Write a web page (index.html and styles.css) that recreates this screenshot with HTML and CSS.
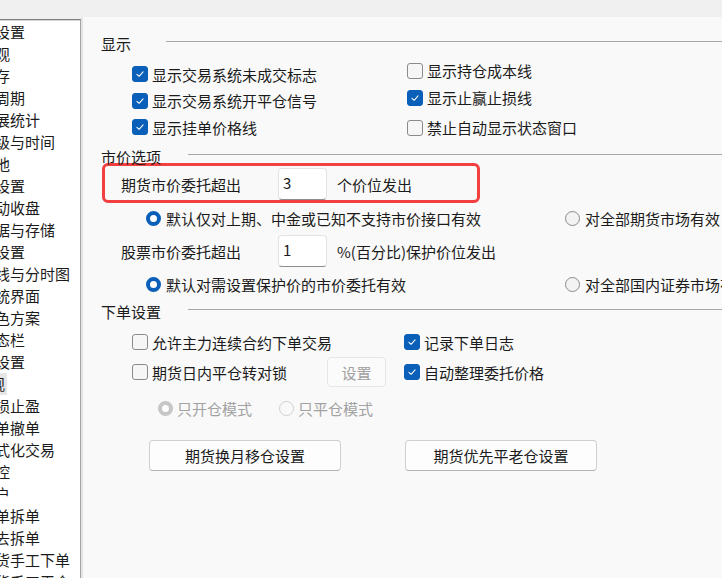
FILE: index.html
```html
<!DOCTYPE html>
<html lang="zh-CN">
<head>
  <meta charset="UTF-8" />
  <meta name="viewport" content="width=device-width, initial-scale=1.0" />
  <title>交易设置</title>
  <link rel="stylesheet" href="styles.css">
</head>

<body>
  <div class="window">
    <ul class="nav-list">
      <li>设置</li>
      <li>观</li>
      <li>存</li>
      <li>周期</li>
      <li>展统计</li>
      <li>级与时间</li>
      <li>他</li>
      <li>设置</li>
      <li>动收盘</li>
      <li>据与存储</li>
      <li>设置</li>
      <li>线与分时图</li>
      <li>统界面</li>
      <li>色方案</li>
      <li>态栏</li>
      <li>设置</li>
      <li><span class="current">观</span></li>
      <li>损止盈</li>
      <li>单撤单</li>
      <li>式化交易</li>
      <li>控</li>
      <li>户</li>
      <li>单拆单</li>
      <li>去拆单</li>
      <li>货手工下单</li>
      <li>货手工平仓</li>
    </ul>
    <div class="gutter"></div>

    <div class="panel">
      <!-- 显示 -->
      <div class="group-title">
        <span class="title-text short">显示</span>
        <span class="title-line"></span>
      </div>
      <div class="check-grid">
        <div class="check-col first">
          <label class="check-row"><span class="box on"><svg viewBox="0 0 16 16"><polyline points="4.5,8.3 7,10.6 11.5,5.6" /></svg></span>显示交易系统未成交标志</label>
          <label class="check-row"><span class="box on"><svg viewBox="0 0 16 16"><polyline points="4.5,8.3 7,10.6 11.5,5.6" /></svg></span>显示交易系统开平仓信号</label>
          <label class="check-row"><span class="box on"><svg viewBox="0 0 16 16"><polyline points="4.5,8.3 7,10.6 11.5,5.6" /></svg></span>显示挂单价格线</label>
        </div>
        <div class="check-col second">
          <label class="check-row"><span class="box"></span>显示持仓成本线</label>
          <label class="check-row"><span class="box on"><svg viewBox="0 0 16 16"><polyline points="4.5,8.3 7,10.6 11.5,5.6" /></svg></span>显示止赢止损线</label>
          <label class="check-row spaced"><span class="box"></span>禁止自动显示状态窗口</label>
        </div>
      </div>

      <!-- 市价选项 -->
      <div class="group-title gap-top">
        <span class="title-text">市价选项</span>
        <span class="title-line"></span>
      </div>
      <div class="price-row marked">
        <span class="price-label">期货市价委托超出</span>
        <input class="num-input" type="text" value="3" readonly>
        <span class="price-suffix">个价位发出</span>
      </div>
      <div class="radio-row">
        <span class="radio-item wide"><span class="radio on"></span>默认仅对上期、中金或已知不支持市价接口有效</span>
        <span class="radio-item"><span class="radio"></span>对全部期货市场有效</span>
      </div>
      <div class="price-row plain">
        <span class="price-label">股票市价委托超出</span>
        <input class="num-input" type="text" value="1" readonly>
        <span class="price-suffix">%(百分比)保护价位发出</span>
      </div>
      <div class="radio-row">
        <span class="radio-item wide"><span class="radio on"></span>默认对需设置保护价的市价委托有效</span>
        <span class="radio-item"><span class="radio"></span>对全部国内证券市场有效</span>
      </div>

      <!-- 下单设置 -->
      <div class="group-title gap-top-lg">
        <span class="title-text">下单设置</span>
        <span class="title-line"></span>
      </div>
      <div class="order-row first">
        <label class="check-row order-a wide"><span class="box"></span>允许主力连续合约下单交易</label>
        <label class="check-row"><span class="box on"><svg viewBox="0 0 16 16"><polyline points="4.5,8.3 7,10.6 11.5,5.6" /></svg></span>记录下单日志</label>
      </div>
      <div class="order-row">
        <label class="check-row order-a"><span class="box"></span>期货日内平仓转对锁</label>
        <button class="btn-small" disabled>设置</button>
        <label class="check-row"><span class="box on"><svg viewBox="0 0 16 16"><polyline points="4.5,8.3 7,10.6 11.5,5.6" /></svg></span>自动整理委托价格</label>
      </div>
      <div class="radio-row disabled">
        <span class="radio-item mode"><span class="radio dim-on"></span>只开仓模式</span>
        <span class="radio-item"><span class="radio dim"></span>只平仓模式</span>
      </div>

      <div class="button-row">
        <button class="btn">期货换月移仓设置</button>
        <button class="btn">期货优先平老仓设置</button>
      </div>
    </div>
  </div>
</body>
</html>
```

FILE: styles.css
```css
body {
  margin: 0;
  background: #f0f0f0;
  font-family: "Noto Sans CJK SC", "Microsoft YaHei", sans-serif;
  font-size: 15px;
  color: #1b1b1b;
  overflow: hidden;
}

.window {
  display: flex;
  height: 578px;
  padding-top: 17px;
  box-sizing: border-box;
}

/* left tree, scrolled sideways */
.nav-list {
  margin: 2px 0 0;
  padding: 1px 0 0;
  list-style: none;
  width: 80px;
  flex-shrink: 0;
  background: #fff;
  border-top: 1px solid #7d7d7d;
  border-right: 1px solid #a3a3a3;
  box-shadow: inset 0 1px 0 #d6d6d6;
  overflow: hidden;
}

.nav-list li {
  height: 22px;
  line-height: 22px;
  text-indent: -5px;
  white-space: nowrap;
}

.nav-list .current {
  display: inline-block;
  background: #e6e6e6;
  padding-right: 2px;
}

.gutter {
  width: 2px;
  flex-shrink: 0;
  background: #e4e4e4;
}

.panel {
  flex: 1;
  min-width: 0;
  background: #f9f9f9;
  padding: 20px 0 0 18px;
  overflow: hidden;
  white-space: nowrap;
}

/* group headers */
.group-title {
  display: flex;
  align-items: flex-start;
  height: 14px;
  line-height: 14px;
}

.title-text {
  width: 87px;
  flex-shrink: 0;
}

.title-text.short {
  width: 65px;
}

.title-line {
  flex: 1;
  height: 1px;
  margin-top: 4px;
  background: #a6a6a6;
}

.gap-top {
  margin-top: 9px;
}

.gap-top-lg {
  margin-top: 10px;
}

/* checkboxes */
.check-grid {
  display: flex;
  margin-top: 6px;
  padding-left: 31px;
}

.check-col.first {
  width: 275px;
  flex-shrink: 0;
  padding-top: 4px;
}

.check-col.first .check-row {
  height: 26.5px;
}

.check-row {
  display: flex;
  align-items: center;
  gap: 4px;
  height: 27px;
  flex-shrink: 0;
}

.check-row.spaced {
  margin-top: 3px;
}

.box {
  width: 16px;
  height: 16px;
  flex-shrink: 0;
  box-sizing: border-box;
  border: 1px solid #8b8b8b;
  border-radius: 3px;
  background: #f6f6f6;
}

.box.on {
  background: #0a5fb8;
  border-color: #0a5fb8;
}

.box svg {
  display: block;
  width: 14px;
  height: 14px;
  fill: none;
  stroke: #fff;
  stroke-width: 1.2;
  stroke-linecap: round;
  stroke-linejoin: round;
}

/* market price rows */
.price-row {
  display: flex;
  align-items: center;
}

.price-row.marked {
  width: 378px;
  box-sizing: border-box;
  margin: -1px 0 0 1px;
  padding: 2px 0 0 16px;
  border: 3px solid #f23f3f;
  border-radius: 6px;
}

.price-row.plain {
  margin-top: 6px;
  padding-left: 20px;
}

.price-label {
  width: 157px;
  flex-shrink: 0;
}

.num-input {
  width: 49px;
  height: 32px;
  flex-shrink: 0;
  box-sizing: border-box;
  padding: 0 4px 3px;
  border: 1px solid #e3e3e3;
  border-bottom-color: #8d8d8d;
  border-radius: 4px;
  background: #fff;
  font: inherit;
  color: #1b1b1b;
  outline: none;
}

.price-suffix {
  margin-left: 10px;
}

/* radios */
.radio-row {
  display: flex;
  align-items: center;
  height: 22px;
  margin-top: 4px;
  padding-left: 45px;
}

.price-row.plain + .radio-row {
  margin-top: 6px;
}

.radio-item {
  display: flex;
  align-items: center;
  gap: 5px;
  flex-shrink: 0;
}

.radio-item.wide {
  width: 419px;
}

.radio {
  width: 15px;
  height: 15px;
  flex-shrink: 0;
  box-sizing: border-box;
  border: 1px solid #8a8a8a;
  border-radius: 50%;
  background: #f3f3f3;
}

.radio.on {
  border: 4px solid #0a5fb8;
  background: #fff;
}

.radio.dim-on {
  border: 4px solid #c6c6c6;
  background: #fff;
}

.radio.dim {
  border-color: #d0d0d0;
  background: #f9f9f9;
}

.radio-row.disabled {
  margin-top: 10px;
  padding-left: 57px;
  color: #a2a2a2;
}

.radio-row.disabled .radio-item {
  gap: 4px;
}

.radio-item.mode {
  width: 121px;
}

/* order settings */
.order-row {
  display: flex;
  align-items: center;
  height: 30px;
  padding-left: 31px;
}

.order-row.first {
  margin-top: 8px;
}

.order-row .check-row {
  height: 30px;
}

.order-a {
  width: 195px;
}

.order-a.wide {
  width: 272px;
}

.btn-small {
  width: 59px;
  height: 30px;
  flex-shrink: 0;
  margin-right: 18px;
  padding: 0;
  border: 1px solid #e6e6e6;
  border-radius: 4px;
  background: #fbfbfb;
  color: #a0a0a0;
  font: inherit;
}

.button-row {
  display: flex;
  gap: 64px;
  margin-top: 21px;
  padding-left: 48px;
}

.btn {
  width: 192px;
  height: 31px;
  flex-shrink: 0;
  padding: 0;
  border: 1px solid #d0d0d0;
  border-bottom-color: #b3b3b3;
  border-radius: 4px;
  background: #fdfdfd;
  color: #1b1b1b;
  font: inherit;
  cursor: pointer;
}
```
